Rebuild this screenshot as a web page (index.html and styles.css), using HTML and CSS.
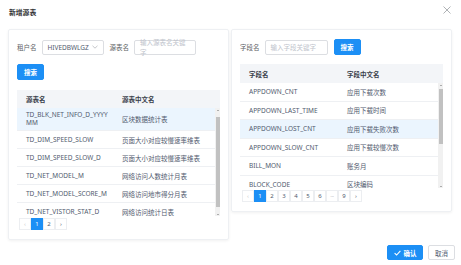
FILE: index.html
```html
<!DOCTYPE html>
<html lang="zh-CN">
<head>
  <meta charset="UTF-8">
  <title>新增源表</title>
  <link rel="stylesheet" href="styles.css">
</head>
<body>
  <div class="dialog">
    <div class="dialog-head">
      <span class="dialog-title">新增源表</span>
      <span class="close-btn">
        <svg width="8" height="8" viewBox="0 0 8 8"><path d="M0.5 0.5L7.5 7.5M7.5 0.5L0.5 7.5" stroke="#a6a9ad" stroke-width="0.9"/></svg>
      </span>
    </div>

    <div class="dialog-body">
      <!-- 源表 -->
      <div class="panel panel-left">
        <div class="search-row">
          <label>租户名</label>
          <div class="select">
            <span>HIVEDBWLGZ</span>
            <svg width="6" height="4" viewBox="0 0 6 4"><path d="M0.5 0.8L3 3.2L5.5 0.8" fill="none" stroke="#b5b8bd" stroke-width="0.8"/></svg>
          </div>
          <label>源表名</label>
          <div class="input placeholder">输入源表名关键字</div>
        </div>
        <div class="btn-row">
          <button class="btn btn-primary">搜索</button>
        </div>
        <div class="table table-left">
          <div class="thead">
            <div class="cell">源表名</div>
            <div class="cell">源表中文名</div>
          </div>
          <div class="tbody">
            <div class="rows">
              <div class="row active">
                <div class="cell wrap">TD_BLK_NET_INFO_D_YYYYMM</div>
                <div class="cell">区块数据统计表</div>
              </div>
              <div class="row">
                <div class="cell">TD_DIM_SPEED_SLOW</div>
                <div class="cell">页面大小对应较慢速率维表</div>
              </div>
              <div class="row">
                <div class="cell">TD_DIM_SPEED_SLOW_D</div>
                <div class="cell">页面大小对应较慢速率维表</div>
              </div>
              <div class="row">
                <div class="cell">TD_NET_MODEL_M</div>
                <div class="cell">网络访问人数统计月表</div>
              </div>
              <div class="row">
                <div class="cell">TD_NET_MODEL_SCORE_M</div>
                <div class="cell">网络访问地市得分月表</div>
              </div>
              <div class="row">
                <div class="cell">TD_NET_VISTOR_STAT_D</div>
                <div class="cell">网络访问统计日表</div>
              </div>
            </div>
            <div class="vscroll">
              <span class="arrow up"></span>
              <span class="track"><span class="thumb"></span></span>
              <span class="arrow down"></span>
            </div>
          </div>
        </div>
        <div class="pager">
          <span class="page disabled">&lsaquo;</span>
          <span class="page current">1</span>
          <span class="page">2</span>
          <span class="page">&rsaquo;</span>
        </div>
      </div>

      <!-- 字段 -->
      <div class="panel panel-right">
        <div class="search-row">
          <label>字段名</label>
          <div class="input placeholder field-input">输入字段关键字</div>
          <button class="btn btn-primary">搜索</button>
        </div>
        <div class="table table-right">
          <div class="thead">
            <div class="cell">字段名</div>
            <div class="cell">字段中文名</div>
          </div>
          <div class="tbody">
            <div class="rows">
              <div class="row"><div class="cell">APPDOWN_CNT</div><div class="cell">应用下载次数</div></div>
              <div class="row"><div class="cell">APPDOWN_LAST_TIME</div><div class="cell">应用下载时间</div></div>
              <div class="row active"><div class="cell">APPDOWN_LOST_CNT</div><div class="cell">应用下载失败次数</div></div>
              <div class="row"><div class="cell">APPDOWN_SLOW_CNT</div><div class="cell">应用下载较慢次数</div></div>
              <div class="row"><div class="cell">BILL_MON</div><div class="cell">账务月</div></div>
              <div class="row"><div class="cell">BLOCK_CODE</div><div class="cell">区块编码</div></div>
            </div>
            <div class="vscroll">
              <span class="arrow up"></span>
              <span class="track"><span class="thumb"></span></span>
              <span class="arrow down"></span>
            </div>
          </div>
        </div>
        <div class="pager">
          <span class="page disabled">&lsaquo;</span>
          <span class="page current">1</span>
          <span class="page">2</span>
          <span class="page">3</span>
          <span class="page">4</span>
          <span class="page">5</span>
          <span class="page">6</span>
          <span class="page more">&middot;&middot;&middot;</span>
          <span class="page">9</span>
          <span class="page">&rsaquo;</span>
        </div>
      </div>
    </div>

    <div class="dialog-foot">
      <button class="btn btn-primary btn-ok">
        <svg width="7" height="6" viewBox="0 0 7 6"><path d="M0.6 3.1L2.6 5L6.4 0.9" fill="none" stroke="#fff" stroke-width="1.1"/></svg>
        确认
      </button>
      <button class="btn btn-default">取消</button>
    </div>
  </div>
</body>
</html>
```

FILE: styles.css
```css
body {
  margin: 0;
  background: #fff;
  font-family: "Noto Sans", "Noto Sans CJK SC", sans-serif;
  font-size: 6.5px;
  color: #515a6e;
}
.dialog {
  width: 461px;
  height: 265px;
  box-sizing: border-box;
}
.dialog-head {
  display: flex;
  justify-content: space-between;
  align-items: center;
  height: 22px;
  padding: 2px 10px 0 9px;
  box-sizing: border-box;
}
.dialog-title {
  font-size: 6.8px;
  font-weight: bold;
  color: #303133;
}
.close-btn {
  display: flex;
  margin-top: -4px;
}
.dialog-body {
  display: flex;
  align-items: flex-start;
  gap: 2px;
  padding: 7px 0 0 8px;
}
.panel {
  width: 221px;
  box-sizing: border-box;
  border: 1px solid #eef0f3;
  border-radius: 2px;
  box-shadow: 0 1px 3px rgba(0, 0, 0, 0.06);
  padding: 9px 8px 9px 8px;
}
.search-row {
  display: flex;
  align-items: center;
  height: 16px;
}
.search-row label {
  color: #606266;
  margin-right: 5px;
}
.select, .input {
  height: 15px;
  box-sizing: border-box;
  border: 1px solid #dcdee2;
  border-radius: 2px;
  display: flex;
  align-items: center;
  padding: 0 5px;
  width: 62px;
}
.select {
  justify-content: space-between;
  color: #515a6e;
  margin-right: 6px;
}
.placeholder {
  color: #c0c4cc;
}
.field-input {
  width: 63px;
  margin-right: 6px;
}
.btn {
  font-family: inherit;
  font-size: 6.5px;
  border-radius: 2px;
  cursor: pointer;
  display: flex;
  align-items: center;
  justify-content: center;
  padding: 0;
}
.btn-primary {
  background: #1c8ff5;
  border: 1px solid #1c8ff5;
  color: #fff;
  font-weight: bold;
  width: 27px;
  height: 16px;
}
.btn-default {
  background: #fff;
  border: 1px solid #dcdee2;
  color: #515a6e;
  width: 27px;
  height: 15px;
}
.btn-row {
  margin-top: 9px;
}
.table {
  margin-top: 10px;
}
.thead {
  display: flex;
  background: #f3f5f8;
  font-weight: bold;
  color: #3a3f4b;
}
.thead .cell:last-child {
  padding-right: 15px;
}
.row {
  display: flex;
  border-bottom: 1px solid #eef0f3;
  box-sizing: border-box;
}
.row.active {
  background: #ebf5fe;
}
.cell {
  padding: 0 9px;
  box-sizing: border-box;
  display: flex;
  align-items: center;
  min-width: 0;
  white-space: nowrap;
}
.cell:first-child {
  flex: 0 0 96px;
}
.cell:last-child {
  flex: 1;
}
.wrap {
  white-space: normal;
  word-break: break-all;
  line-height: 8.5px;
  padding-right: 5px;
}
.tbody {
  display: flex;
}
.rows {
  flex: 1;
  min-width: 0;
  overflow: hidden;
}
.vscroll {
  flex: 0 0 5px;
  display: flex;
  flex-direction: column;
  align-items: center;
  background: #f1f1f1;
}
.arrow {
  flex: 0 0 4px;
  display: flex;
  align-items: center;
  justify-content: center;
}
.arrow::before {
  content: "";
  border-left: 1.5px solid transparent;
  border-right: 1.5px solid transparent;
}
.arrow.up::before {
  border-bottom: 1.5px solid #6b6b6b;
}
.arrow.down::before {
  border-top: 1.5px solid #6b6b6b;
}
.track {
  flex: 1;
  width: 100%;
  display: flex;
  flex-direction: column;
}
.thumb {
  background: #c1c1c1;
  margin: 0 0.5px;
}

/* left table */
.table-left {
  width: 203px;
}
.table-left .thead {
  height: 18px;
}
.table-left .tbody {
  height: 108px;
}
.table-left .row {
  height: 18px;
}
.table-left .row:first-child {
  height: 23px;
}
.table-left .thumb {
  margin-top: 5px;
  height: 90px;
}

/* right table */
.table-right {
  width: 203px;
  margin-top: 9px;
}
.table-right .thead {
  height: 19px;
}
.table-right .tbody {
  height: 105px;
}
.table-right .row {
  height: 18.5px;
}
.table-right .cell:first-child {
  flex: 0 0 98px;
}
.table-right .thumb {
  margin-top: 2px;
  height: 55px;
}

.pager {
  display: flex;
  margin-top: 2px;
  padding-left: 2px;
}
.page {
  width: 12px;
  height: 12px;
  box-sizing: border-box;
  border: 1px solid #eceef1;
  display: flex;
  align-items: center;
  justify-content: center;
  font-size: 6px;
  color: #515a6e;
}
.page.disabled {
  color: #c5c8ce;
}
.page.current {
  background: #1c8ff5;
  border-color: #1c8ff5;
  color: #fff;
}
.page.more {
  color: #9ea3ab;
  letter-spacing: -0.5px;
}
.dialog-foot {
  display: flex;
  justify-content: flex-end;
  gap: 5px;
  padding: 5px 6px 0 0;
}
.btn-ok {
  width: 36px;
  height: 15px;
  gap: 3px;
}
```
